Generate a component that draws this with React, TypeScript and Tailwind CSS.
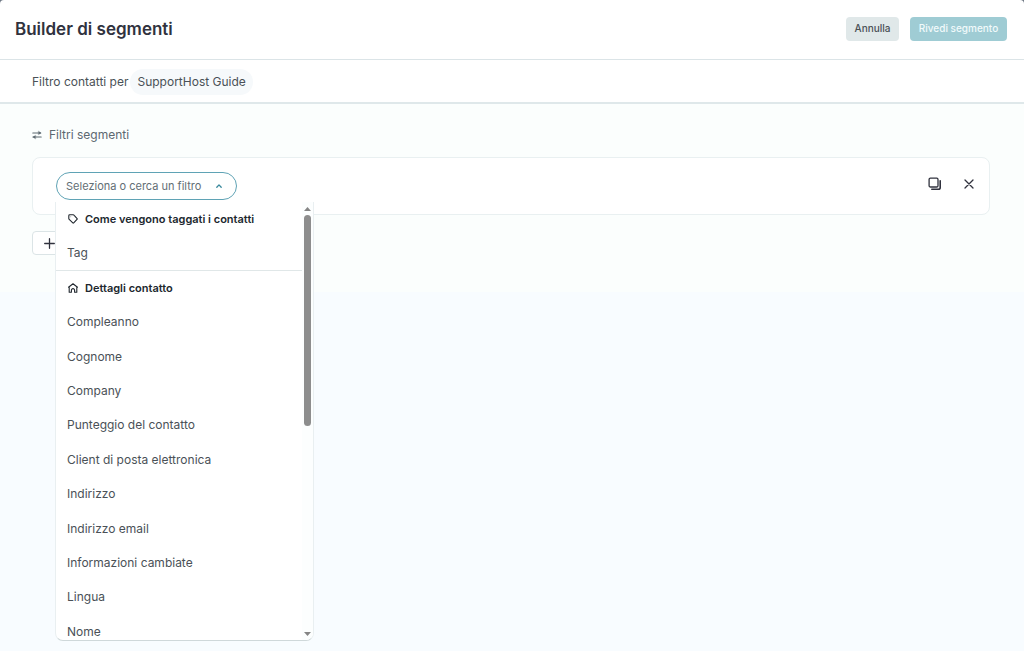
import React from "react";

const contactFilters = [
  "Compleanno",
  "Cognome",
  "Company",
  "Punteggio del contatto",
  "Client di posta elettronica",
  "Indirizzo",
  "Indirizzo email",
  "Informazioni cambiate",
  "Lingua",
  "Nome",
];

const stroke = {
  fill: "none",
  stroke: "currentColor",
  strokeLinecap: "round",
  strokeLinejoin: "round",
} as const;

function SwapIcon() {
  return (
    <svg width="10" height="10" viewBox="0 0 10 10" {...stroke} strokeWidth="1.1" aria-hidden="true">
      <path d="M0.8 3H8.6M1 7H9.2" />
      <path d="M6.6 1.2 9.2 3 6.6 4.6ZM3.4 5.4 0.8 7 3.4 8.8Z" fill="currentColor" strokeWidth="0.3" />
    </svg>
  );
}

function TagIcon() {
  return (
    <svg width="10" height="10" viewBox="0 0 10 10" {...stroke} strokeWidth="1.1" aria-hidden="true">
      <path d="M1.7 0.8H5.2Q5.8 0.8 6.2 1.3L9.1 4.6Q9.4 5 9 5.4L5.7 8.9Q5.2 9.3 4.8 8.9L1.2 5.4Q0.8 5 0.8 4.5V1.7Q0.8 0.8 1.7 0.8Z" />
      <circle cx="2.8" cy="2.8" r="0.4" fill="currentColor" stroke="none" />
    </svg>
  );
}

function HomeIcon() {
  return (
    <svg width="10" height="10" viewBox="0 0 10 10" {...stroke} strokeWidth="1.1" aria-hidden="true">
      <path d="M0.5 4.2 5 0.7 9.5 4.2M1.2 3.8V9.3H3.4V7.2A1.6 1.6 0 0 1 6.6 7.2V9.3H8.8V3.8" />
    </svg>
  );
}

function CopyIcon() {
  return (
    <svg width="14" height="14" viewBox="0 0 14 14" {...stroke} strokeWidth="1.3" aria-hidden="true">
      <rect x="1.1" y="1.1" width="8.9" height="8.9" rx="1.3" />
      <path d="M12.2 3.7V10.4A1.8 1.8 0 0 1 10.4 12.2H3.8" strokeWidth="1.6" />
    </svg>
  );
}

function CloseIcon() {
  return (
    <svg width="10" height="10" viewBox="0 0 10 10" {...stroke} strokeWidth="1.3" aria-hidden="true">
      <path d="M1 1 9 9M9 1 1 9" />
    </svg>
  );
}

function PlusIcon() {
  return (
    <svg width="11" height="11" viewBox="0 0 11 11" {...stroke} strokeWidth="1.3" aria-hidden="true">
      <path d="M5.5 0.7V10.3M0.7 5.5H10.3" />
    </svg>
  );
}

function GroupHeading({ icon, children }: { icon: React.ReactNode; children: React.ReactNode }) {
  return (
    <li role="presentation" className="flex items-center gap-[7px] pl-3 text-[11px] font-semibold text-[#20272e]">
      {icon}
      <span>{children}</span>
    </li>
  );
}

function FilterOption({ children }: { children: React.ReactNode }) {
  return (
    <li role="option" aria-selected="false" className="flex items-center pl-[11px]">
      {children}
    </li>
  );
}

function FilterMenu() {
  return (
    <div className="absolute -left-px top-[30px] z-10 flex h-[439px] w-[259px] overflow-hidden rounded-b-lg border border-t-0 border-[#e9eff1] border-b-[#cfd8da] bg-white">
      <ul
        role="listbox"
        aria-label="Filtri"
        className="grid h-[447px] flex-1 auto-rows-fr text-[12px] text-[#4a5157]"
      >
        <GroupHeading icon={<TagIcon />}>Come vengono taggati i contatti</GroupHeading>
        <li role="option" aria-selected="false" className="flex items-center border-b border-[#e0e7e8] pl-[11px]">
          Tag
        </li>
        <GroupHeading icon={<HomeIcon />}>Dettagli contatto</GroupHeading>
        {contactFilters.map((name) => (
          <FilterOption key={name}>{name}</FilterOption>
        ))}
      </ul>
      <div className="flex w-[11px] flex-col items-center bg-[#fcfefe] pb-1 pt-[5px]" aria-hidden="true">
        <svg width="7" height="4" viewBox="0 0 7 4" fill="#858585">
          <path d="M0 4 3.5 0 7 4Z" />
        </svg>
        <div className="mt-1 h-[211px] w-[7px] rounded-full bg-[#8d8d8d]" />
        <svg className="mt-auto" width="7" height="4" viewBox="0 0 7 4" fill="#858585">
          <path d="M0 0 3.5 4 7 0Z" />
        </svg>
      </div>
    </div>
  );
}

export default function App() {
  return (
    <div className="min-h-screen bg-[#f8fcff] font-['Inter',sans-serif] text-[#4a5157]">
      <div className="bg-[#6d7783]">
        <header className="flex h-[60px] items-center justify-between rounded-t-[4px] border-b border-[#dbe4e7] bg-white pb-[2px] pl-[15px] pr-[17px]">
          <h1 className="text-[17px] font-semibold leading-6 text-[#30323e]">Builder di segmenti</h1>
          <div className="flex gap-[11px] text-[10px] font-medium">
            <button type="button" className="h-6 w-[53px] rounded-[4px] bg-[#e0e8e9] text-[#4a5056]">
              Annulla
            </button>
            <button type="button" className="h-6 w-[97px] whitespace-nowrap rounded-[4px] bg-[#9fccd4] text-[#f1fafb]">
              Rivedi segmento
            </button>
          </div>
        </header>
      </div>

      <div className="flex h-11 items-center gap-[2px] border-b-2 border-[#dfe8ea] bg-white pl-8 pt-px text-[12px]">
        <span>Filtro contatti per</span>
        <span className="rounded-full bg-[#f6f9fb] px-[7px] py-1">SupportHost Guide</span>
      </div>

      <main className="h-[188px] bg-[#fbfefd] pl-8 pr-[34px] pt-[22px]">
        <h2 className="flex h-[18px] items-center gap-[7px] text-[12px] text-[#5c6870]">
          <SwapIcon />
          Filtri segmenti
        </h2>

        <section className="mt-[13px] flex h-[58px] items-start justify-between rounded-lg border border-[#e9f0f1] bg-white pl-[23px] pr-[15px] pt-[14px]">
          <div className="relative">
            <button
              type="button"
              aria-haspopup="listbox"
              aria-expanded="true"
              className="flex h-7 w-[181px] items-center justify-between whitespace-nowrap rounded-full border border-[#5fa3b5] bg-white pl-[9px] pr-[14px] text-[11px] text-[#636e75]"
            >
              Seleziona o cerca un filtro
              <svg width="6" height="4" viewBox="0 0 6 4" {...stroke} strokeWidth="1.3" className="text-[#38889c]" aria-hidden="true">
                <path d="M0.8 3.3 3 0.9 5.2 3.3" />
              </svg>
            </button>
            <FilterMenu />
          </div>
          <div className="flex h-6 items-center gap-[22px] text-[#30323e]">
            <button type="button" aria-label="Duplica filtro">
              <CopyIcon />
            </button>
            <button type="button" aria-label="Rimuovi filtro">
              <CloseIcon />
            </button>
          </div>
        </section>

        <button
          type="button"
          aria-label="Aggiungi filtro"
          className="mt-4 flex h-6 w-[130px] items-center rounded-[4px] border border-[#dbe4e6] bg-white pl-[11px] text-[#30323e]"
        >
          <PlusIcon />
        </button>
      </main>
    </div>
  );
}
